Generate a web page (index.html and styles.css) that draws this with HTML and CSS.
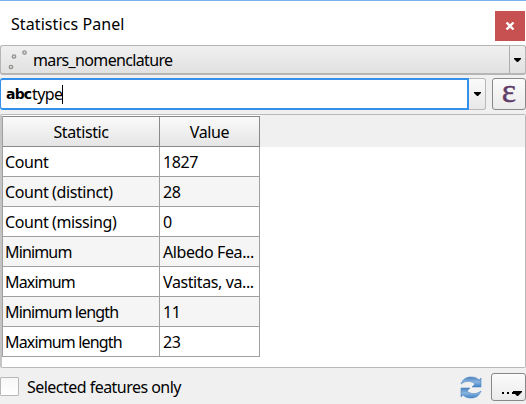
FILE: index.html
```
<!DOCTYPE html>
<html lang="en">
<head>
<meta charset="utf-8">
<title>Statistics Panel</title>
<link rel="stylesheet" href="styles.css">
</head>
<body>
<main class="panel">
  <header class="titlebar">
    <h1><span class="title-text">Statistics Panel</span></h1>
    <button class="close" aria-label="Close"><svg width="10" height="8" viewBox="0 0 10 8"><path d="M1.5 0.5 8.5 7.5M8.5 0.5 1.5 7.5" stroke="#fff" stroke-width="2.3"/></svg></button>
  </header>
  <div class="combo">
    <svg class="points" width="20" height="20" viewBox="0 0 20 20" fill="#e0e0e0" stroke="#92928e" stroke-width="1.3"><circle cx="16.5" cy="2.5" r="1.7"/><circle cx="6" cy="6.5" r="1.7"/><circle cx="3" cy="17" r="1.7"/></svg>
    <span class="layer">mars_nomenclature</span>
    <span class="drop"><svg width="7" height="4" viewBox="0 0 7 4"><path d="M0 0h7v1L4 4H3L0 1z"/></svg></span>
  </div>
  <div class="field-row">
    <div class="field"><b>abc</b><span class="field-name">type</span><i class="caret"></i></div>
    <button class="field-drop" aria-label="Fields"><svg width="7" height="4" viewBox="0 0 7 4"><path d="M0 0h7v1L4 4H3L0 1z"/></svg></button>
    <button class="expression">ɛ</button>
  </div>
  <section class="results">
    <div class="table">
      <div class="row head"><span>Statistic</span><span>Value</span></div>
      <div class="row"><span>Count</span><span>1827</span></div>
      <div class="row"><span>Count (distinct)</span><span>28</span></div>
      <div class="row"><span>Count (missing)</span><span>0</span></div>
      <div class="row"><span class="tight">Minimum</span><span>Albedo Fea...</span></div>
      <div class="row"><span class="tight">Maximum</span><span>Vastitas, va...</span></div>
      <div class="row"><span class="tight">Minimum length</span><span>11</span></div>
      <div class="row"><span class="tight">Maximum length</span><span>23</span></div>
    </div>
    <div class="head-fill"></div>
  </section>
  <footer class="footer">
    <i class="checkbox"></i>
    <span class="selected">Selected features only</span>
    <svg class="refresh" width="22" height="23" viewBox="0 0 22 23">
      <defs><linearGradient id="blue" x1="0" y1="0" x2="0" y2="1"><stop offset="0" stop-color="#4c83bd"/><stop offset=".5" stop-color="#8ab4e0"/><stop offset="1" stop-color="#3f80c4"/></linearGradient></defs>
      <g fill="url(#blue)" stroke="#4f88c2" stroke-width=".6"><path d="M1 8C3 3 6 1 11 1c4 0 6 1 8 3l2-2v9h-9l3-3C12 5 6 4 1 8z"/><path d="M21 15c-2 5-5 7-10 7-4 0-6-1-8-3l-2 2v-9h9l-3 3c3 3 9 4 14 0z"/></g>
    </svg>
    <button class="more" aria-label="More options"><svg width="20" height="7" viewBox="0 0 20 7"><path d="M0 2h2v2H0zM5 2h2v2H5zM10 2h2v2h-2zM11 1h9v1l-4 4h-1l-4-4z"/></svg></button>
  </footer>
</main>
</body>
</html>
```
FILE: styles.css
```
* { box-sizing: border-box; }
body { margin: 0; font: 16px/20px "Noto Sans", sans-serif; color: #000; }
button { margin: 0; padding: 0; font: inherit; }
svg { display: block; }
.panel { width: 526px; height: 404px; background: #f0f0f0; overflow: hidden; display: flex; flex-direction: column; }
.titlebar { height: 45px; flex: none; background: #fff; border-top: 1px solid #7ab3f3; display: flex; justify-content: space-between; padding: 10px 1px 0 11px; }
h1 { margin: 3px 0 0; font: inherit; }
.title-text { letter-spacing: .08px; }
.close { width: 30px; height: 30px; border: 0; background: #c75050; display: grid; place-items: center; }
.combo { height: 30px; flex: none; border: 1px solid #b5b5b5; border-bottom-width: 2px; border-radius: 3px; background: linear-gradient(#f0f0f0, #e1e1e1); display: flex; align-items: center; padding-left: 7px; }
.points { margin-top: 0; }
.layer { margin-left: 5px; flex: 1; letter-spacing: -.65px; }
.drop { width: 16px; align-self: stretch; border-left: 1px solid #adadad; display: grid; place-items: center; }
.field-row { height: 32px; flex: none; margin-top: 3px; display: flex; }
.field { width: 469px; border: 2px solid #3390eb; border-left-width: 1px; border-radius: 3px 0 0 3px; background: #fff; display: flex; align-items: center; padding-left: 5px; }
.field b { font: bold 14px/20px "DejaVu Sans", sans-serif; letter-spacing: -.8px; width: 26px; }
.field-name { letter-spacing: -.6px; }
.caret { width: 1px; height: 19px; background: #000; margin-top: 1px; }
.field-drop { width: 17px; border: 1px solid #b8b8b8; border-left: 0; border-radius: 0 3px 3px 0; background: linear-gradient(#fafafa, #e8e8e8); display: grid; place-items: center; }
.expression { width: 34px; margin-left: 6px; border: 1px solid #888; border-radius: 3px; background: linear-gradient(#fbfbfb, #ebebeb); color: #5f3b68; font: 34px/24px "Liberation Serif", serif; -webkit-text-stroke: .4px #5f3b68; padding-bottom: 6px; }
.results { height: 254px; flex: none; margin-top: 4px; border: 1px solid #b9b9b9; border-left: 2px solid #c4c4c4; border-radius: 2px; background: #fff; display: flex; }
.table { width: 258px; border-left: 1px solid #a0a0a0; margin-top: 1px; align-self: flex-start; }
.row { height: 30px; display: grid; grid-template-columns: 157px 100px; }
.row span { border: solid #a0a0a0; border-width: 0 1px 1px 0; padding: 5px 0 0 3px; line-height: 20px; white-space: nowrap; letter-spacing: -.4px; }
.row span:first-child { padding-left: 2px; }
.row:nth-child(odd) span { background: #f5f5f5; }
.row .tight { letter-spacing: -.85px; }
.row.head { height: 31px; }
.row.head span { border-color: #898989; border-top: 1px solid #898989; padding: 5px 0 0; text-align: center; background: linear-gradient(#fafafa, #e5e5e5); }
.head-fill { flex: 1; height: 32px; background: #f0f0f0; }
.footer { flex: 1; display: flex; align-items: flex-start; padding-top: 5px; }
.checkbox { width: 19px; height: 19px; margin-top: 4px; border: 1px solid #b8b8b8; border-radius: 1px; background: linear-gradient(#f7f7f7, #fff); }
.selected { margin: 4px 0 0 8px; flex: 1; letter-spacing: -.53px; }
.refresh { margin-top: 3px; }
.more { width: 35px; height: 28px; margin-left: 9px; border: 1px solid #888; border-radius: 3px; background: linear-gradient(#fbfbfb, #ebebeb); display: flex; padding: 16px 0 0 10px; }
```
